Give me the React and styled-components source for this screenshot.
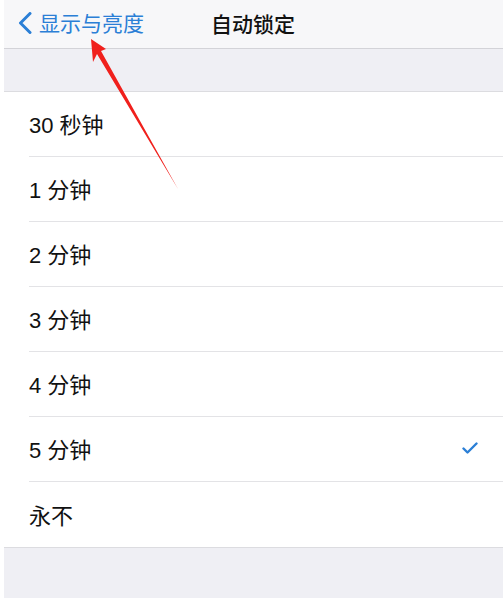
import React from "react";
import styled, { createGlobalStyle } from "styled-components";

const Global = createGlobalStyle`
  html, body { margin: 0; padding: 0; background: #ffffff; }
  body { font-family: "Liberation Sans", "Noto Sans CJK SC", sans-serif; -webkit-font-smoothing: antialiased; }
`;

const Screen = styled.div`
  position: relative;
  width: 503px;
  height: 598px;
  overflow: hidden;
  background: #ffffff;
`;

const Page = styled.div`
  margin-left: 4px;
  height: 598px;
  display: flex;
  flex-direction: column;
  background: #efeff4;
`;

const NavBar = styled.div`
  height: 49px;
  box-sizing: border-box;
  border-bottom: 1px solid #d3d3d8;
  background: #f7f7f9;
  display: grid;
  grid-template-columns: 1fr auto 1fr;
  align-items: center;
`;

const Back = styled.div`
  display: flex;
  align-items: center;
  gap: 7px;
  padding-left: 14px;
  color: #2b7fd6;
  font-size: 21px;
  line-height: 1;
  margin-top: -2px;
`;

const Title = styled.div`
  font-size: 21px;
  font-weight: 500;
  color: #111;
  margin-left: -1px;
  margin-top: -2px;
`;

const Gap = styled.div`
  height: 42px;
  flex: none;
  border-bottom: 1px solid #dcdce0;
`;

const List = styled.div`
  background: #ffffff;
  border-bottom: 1px solid #dcdce0;
  flex: none;
`;

const Row = styled.div`
  padding-left: 25px;
`;

const RowInner = styled.div`
  height: 65px;
  box-sizing: border-box;
  padding-bottom: 2px;
  display: flex;
  align-items: center;
  justify-content: space-between;
  padding-right: 25px;
  border-bottom: ${(p) => (p.$last ? "none" : "1px solid #e3e3e6")};
  font-size: 22px;
  color: #111;
`;

const Overlay = styled.svg`
  position: absolute;
  left: 0;
  top: 0;
  pointer-events: none;
`;

const items = ["30 秒钟", "1 分钟", "2 分钟", "3 分钟", "4 分钟", "5 分钟", "永不"];

export default function App() {
  return (
    <Screen>
      <Global />
      <Page>
        <NavBar>
          <Back>
            <svg width="14" height="22" viewBox="0 0 14 22">
              <polyline points="12,1.5 2.5,11 12,20.5" fill="none" stroke="#2b7fd6" strokeWidth="3" strokeLinecap="round" strokeLinejoin="round" />
            </svg>
            <span>显示与亮度</span>
          </Back>
          <Title>自动锁定</Title>
          <div />
        </NavBar>
        <Gap />
        <List>
          {items.map((t, i) => (
            <Row key={t}>
              <RowInner $last={i === items.length - 1}>
                <span>{t}</span>
                {t === "5 分钟" && (
                  <svg width="16" height="12" viewBox="0 0 16 12">
                    <polyline points="1.5,6.5 5.5,10.5 14.5,1.5" fill="none" stroke="#2b7fd6" strokeWidth="2.4" strokeLinecap="round" strokeLinejoin="round" />
                  </svg>
                )}
              </RowInner>
            </Row>
          ))}
        </List>
      </Page>
      <Overlay width="503" height="598" viewBox="0 0 503 598">
        <polygon points="91,39 106,49 101,51 178,189 97,54 93,62" fill="#f0201c" />
      </Overlay>
    </Screen>
  );
}
